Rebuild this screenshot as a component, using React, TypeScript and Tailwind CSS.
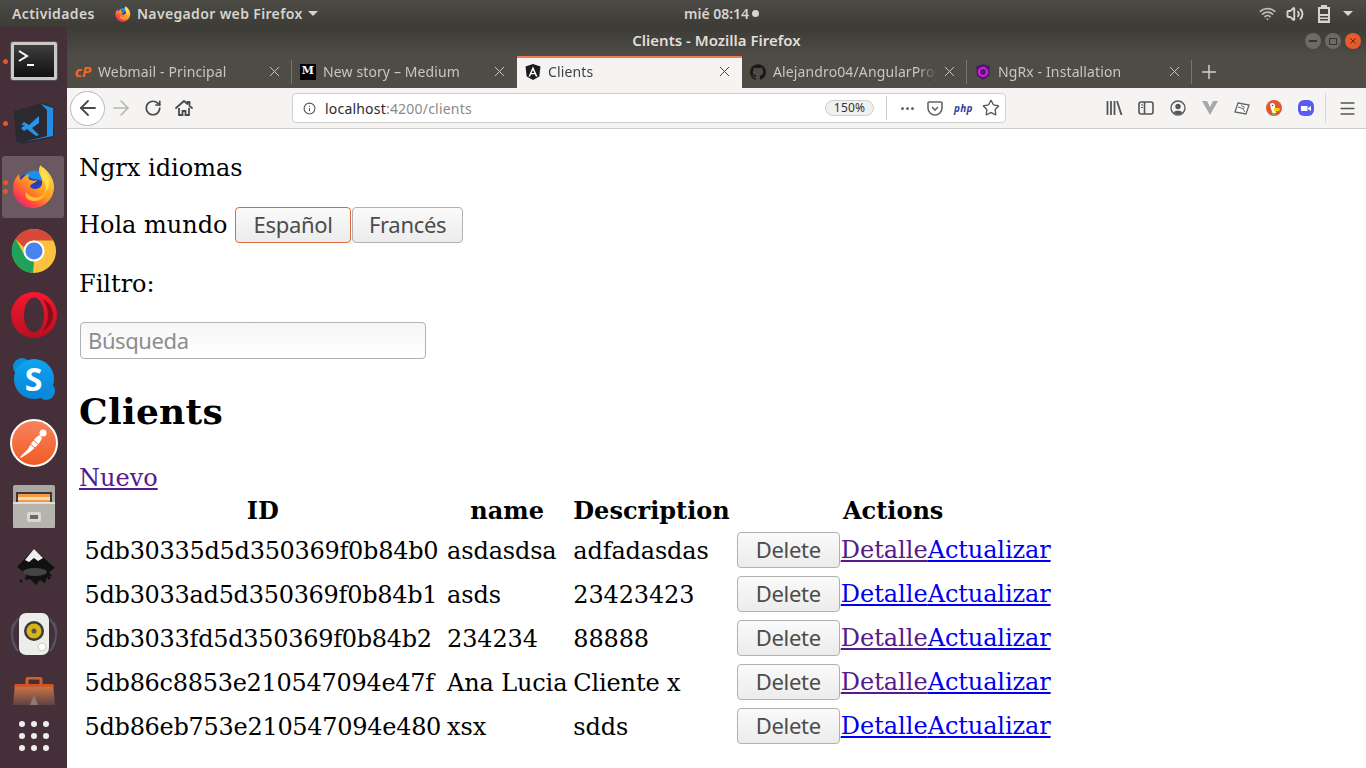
import { X, Plus, Info, ArrowLeft, ArrowRight, RotateCw, Star, Menu, Wifi, Volume2 } from "lucide-react";
import { SiGithub } from "react-icons/si";

const UI = "font-['Noto_Sans',sans-serif]";

const rows = [
  ["5db30335d5d350369f0b84b0", "asdasdsa", "adfadasdas", true],
  ["5db3033ad5d350369f0b84b1", "asds", "23423423", false],
  ["5db3033fd5d350369f0b84b2", "234234", "88888", true],
  ["5db86c8853e210547094e47f", "Ana Lucia", "Cliente x", true],
  ["5db86eb753e210547094e480", "xsx", "sdds", false],
] as const;

function FirefoxLogo({ size }: { size: number }) {
  return (
    <svg width={size} height={size} viewBox="0 0 44 44">
      <defs>
        <linearGradient id="ffa" x1="0.8" y1="0" x2="0.1" y2="0.9">
          <stop offset="0" stopColor="#ffe14d" />
          <stop offset="0.5" stopColor="#ff9a1f" />
          <stop offset="0.85" stopColor="#ff3b4a" />
          <stop offset="1" stopColor="#d92b8a" />
        </linearGradient>
      </defs>
      <circle cx="21" cy="24" r="17" fill="#2b3fb8" />
      <path d="M12 10c5-5 14-6 20-1 3 3 4 8 3 12-3-5-8-7-14-7z" fill="#1c8ef0" />
      <path d="M29 1c8 5 13 13 13 21 0 12-10 21-21 21C10 43 1 34 1 24c0-6 2-11 6-15 0 3 1 5 2 6 2-3 5-5 8-6-1 2-1 5 1 6 3 1 5 1 7 0-1 3-5 3-7 6 1 3 5 4 9 2 2-1 3-3 3-5 1-4-3-8-3-12 0-2 0-4 2-6z" fill="url(#ffa)" />
      <path d="M14 27c4 6 12 7 17 3 2-2 3-4 3-7 1 7-4 13-12 13-6 0-10-4-8-9z" fill="#ffbd2e" />
      <path d="M30 4c-2 4-1 8 1 11 3 4 4 8 2 12 4-3 6-10 3-15-1-3-3-6-6-8z" fill="#ffe14d" />
    </svg>
  );
}

function Terminal() {
  return (
    <div className="w-[46px] h-[38px] rounded-[2px] border-[3px] border-[#c9c9c5] bg-gradient-to-b from-[#3f3f3f] to-[#111] shadow-[0_0_0_1px_#555]">
      <svg width="40" height="32" viewBox="0 0 40 32">
        <path d="M5 6l8 5-8 5" fill="none" stroke="#fff" strokeWidth="2" />
        <path d="M13 20h7" stroke="#fff" strokeWidth="2" />
      </svg>
    </div>
  );
}

function VSCode() {
  return (
    <svg width="42" height="42" viewBox="0 0 42 42">
      <path d="M1 8L30 0l10 4 1 30-32 7-6-3z" fill="#2a2a30" />
      <path d="M28 1l12 4v28l-29 6 23-6V7z" fill="#1f8fe6" />
      <path d="M8 22l3-3 5 3 10-9v7l-7 5 7 7-3 1-9-7-3 2-3-3 4-3z" fill="#2796ea" />
    </svg>
  );
}

function Chrome() {
  return (
    <svg width="46" height="46" viewBox="0 0 46 46">
      <circle cx="23" cy="23" r="22" fill="#fbc23e" />
      <path d="M23 1a22 22 0 0 1 19.300 11.500H23a10.500 10.500 0 0 0-10 7L4.500 11A22 22 0 0 1 23 1z" fill="#d9493b" />
      <path d="M4.500 11l9.500 17a10.500 10.500 0 0 0 9 5.500L22 45A22 22 0 0 1 4.500 11z" fill="#1fa25a" />
      <circle cx="23" cy="23" r="10.500" fill="#fff" />
      <circle cx="23" cy="23" r="8.500" fill="#4a83ee" />
    </svg>
  );
}

function Opera() {
  return (
    <svg width="46" height="46" viewBox="0 0 46 46">
      <defs>
        <linearGradient id="op" x1="0" y1="0" x2="0" y2="1">
          <stop offset="0" stopColor="#f8182e" />
          <stop offset="1" stopColor="#b90f22" />
        </linearGradient>
      </defs>
      <circle cx="23" cy="23" r="23" fill="url(#op)" />
      <ellipse cx="23" cy="23" rx="10" ry="17.500" fill="#45303a" />
      <path d="M31 7c7 3 11 9 11 16s-4 13-11 16c4-4 6-10 6-16S35 11 31 7z" fill="#8e0b1c" />
    </svg>
  );
}

function Skype() {
  return (
    <div className="relative w-[42px] h-[42px]">
      <div className="absolute left-0 top-0 w-[18px] h-[18px] rounded-full bg-[#0a8ddb]" />
      <div className="absolute right-0 bottom-0 w-[18px] h-[18px] rounded-full bg-[#0a8ddb]" />
      <div className="absolute inset-[1px] rounded-full bg-gradient-to-b from-[#0fa4ee] to-[#0a84d6] flex items-center justify-center">
        <span className="font-['Noto_Sans',sans-serif] text-white font-bold text-[32px] leading-none">S</span>
      </div>
    </div>
  );
}

function Postman() {
  return (
    <div className="w-[48px] h-[48px] rounded-full border-2 border-white bg-gradient-to-b from-[#f9825a] to-[#f05a23] flex items-center justify-center">
      <svg width="40" height="40" viewBox="0 0 40 40">
        <circle cx="29" cy="10" r="3.500" fill="#fff" />
        <path d="M26 12c-4 1-9 8-12 14l-8 8 1 1 9-6c5-4 11-10 12-14z" fill="#fff" />
        <path d="M15 20l6 5M18 16l6 5" stroke="#f2693a" strokeWidth="1" />
      </svg>
    </div>
  );
}

function Files() {
  return (
    <svg width="42" height="44" viewBox="0 0 42 44">
      <rect x="0" y="0" width="42" height="42" rx="2" fill="#a9a8a3" />
      <rect x="3" y="7" width="36" height="12" fill="#3c3a38" />
      <rect x="5" y="9" width="32" height="8" fill="#f09a4a" />
      <rect x="5" y="12" width="32" height="3" fill="#f5d9a8" />
      <rect x="0" y="17" width="42" height="26" rx="1" fill="#b5b4af" />
      <rect x="0" y="17" width="42" height="2" fill="#dfdeda" />
      <rect x="14" y="27" width="14" height="10" rx="2" fill="#d8d7d3" />
      <rect x="17" y="30" width="8" height="4" fill="#6a6964" />
    </svg>
  );
}

function Inkscape() {
  return (
    <svg width="46" height="46" viewBox="0 0 46 46">
      <path d="M23 1L44 20l-6 4 3 4-5 1-2 6-5-3-4 5-6-6-5 1 1-6-9-7z" fill="#111" />
      <path d="M23 1l9 9-5 3-4-3-5 4-4-2z" fill="#eee" />
      <ellipse cx="24" cy="24" rx="12" ry="4" fill="#444" />
      <circle cx="38" cy="30" r="1.500" fill="#111" />
      <circle cx="10" cy="33" r="1.500" fill="#111" />
    </svg>
  );
}

function Speaker() {
  return (
    <svg width="48" height="44" viewBox="0 0 48 44">
      <path d="M8 6C0 15 0 29 8 38M4 10c-4 8-2 18 2 24M40 6c8 9 8 23 0 32M44 10c4 8 2 18-2 24" fill="none" stroke="#5d6a86" strokeWidth="2" opacity="0.6" />
      <rect x="9" y="0" width="30" height="42" rx="7" fill="#eceeea" />
      <circle cx="24" cy="18" r="10" fill="#3b3b3b" />
      <circle cx="24" cy="18" r="7.500" fill="#d8b31a" />
      <circle cx="24" cy="18" r="2.500" fill="#555" />
      <circle cx="32" cy="34" r="4" fill="#fff" stroke="#ccc" />
    </svg>
  );
}

function Bag() {
  return (
    <svg width="42" height="28" viewBox="0 0 42 28">
      <defs>
        <linearGradient id="bg" x1="0" y1="0" x2="0" y2="1">
          <stop offset="0" stopColor="#d97a45" />
          <stop offset="1" stopColor="#5f4345" />
        </linearGradient>
      </defs>
      <path d="M14 8V3a2 2 0 0 1 2-2h10a2 2 0 0 1 2 2v5" fill="none" stroke="#d2602c" strokeWidth="3" />
      <path d="M2 7h38l2 21H0z" fill="url(#bg)" />
      <path d="M2 7h38l1 3H1z" fill="#c9572a" />
      <path d="M21 18l-4 10h8z" fill="#8e7a78" />
    </svg>
  );
}

function Dock() {
  const items = [
    <Terminal key="t" />,
    <VSCode key="v" />,
    <FirefoxLogo key="f" size={44} />,
    <Chrome key="c" />,
    <Opera key="o" />,
    <Skype key="s" />,
    <Postman key="p" />,
    <Files key="fi" />,
    <Inkscape key="i" />,
    <Speaker key="sp" />,
  ];
  return (
    <aside className="relative w-[67px] shrink-0 bg-[#45303a] flex flex-col items-center pt-[2px] overflow-hidden">
      {items.map((item, i) => (
        <div key={i} className={`relative w-full shrink-0 flex items-center justify-center ${i === 1 ? "h-[62px]" : "h-[64px]"}`}>
          {i === 2 && <div className="absolute left-[2px] top-[1px] w-[62px] h-[62px] rounded-[3px] bg-white/20" />}
          <div className="relative">{item}</div>
          {i === 0 && <span className="absolute left-[3px] top-[30px] w-[5px] h-[5px] rounded-full bg-[#e95420]" />}
          {i === 1 && <span className="absolute left-[3px] top-[28px] w-[5px] h-[5px] rounded-full bg-[#e95420]" />}
          {i === 2 && <span className="absolute left-[3px] top-[25px] w-[5px] h-[5px] rounded-full bg-[#e95420]" />}
          {i === 2 && <span className="absolute left-[3px] top-[34px] w-[5px] h-[5px] rounded-full bg-[#e95420]" />}
        </div>
      ))}
      <div className="h-[46px] shrink-0 flex items-start pt-[10px]"><Bag /></div>
      <div className="grid grid-cols-3 gap-[6px] mt-[8px]">
        {Array.from({ length: 9 }).map((_, i) => (
          <span key={i} className="w-[6px] h-[6px] rounded-full bg-[#eeeeee]" />
        ))}
      </div>
    </aside>
  );
}

function TopBar() {
  return (
    <header className={`relative h-[27px] shrink-0 bg-gradient-to-b from-[#4e4c46] to-[#3c3b36] flex items-center text-[14px] font-semibold text-[#d6d4ce] ${UI}`}>
      <span className="ml-[12px] tracking-[0.4px]">Actividades</span>
      <span className="ml-[20px]"><FirefoxLogo size={16} /></span>
      <span className="ml-[6px] tracking-[0.35px]">Navegador web Firefox</span>
      <span className="ml-[5px] border-x-[5px] border-t-[5px] border-x-transparent border-t-[#d6d4ce]" />
      <span className="absolute left-[684px] flex items-center gap-[3px]">
        mié 08:14 <span className="w-[7px] h-[7px] rounded-full bg-[#d6d4ce]" />
      </span>
      <div className="ml-auto flex items-center pr-[13px]">
        <Wifi size={17} strokeWidth={2.5} className="text-[#bdbbb5]" />
        <Volume2 size={18} strokeWidth={2.5} className="ml-[10px] text-[#d6d4ce]" />
        <svg width="14" height="18" viewBox="0 0 14 18" className="ml-[13px]">
          <path d="M4 0h6v2h3v16H1V2h3z" fill="#d6d4ce" />
          <path d="M3 4h8v5H3z" fill="#45433e" />
          <path d="M3 11h8v1.500H3zM3 14h8v1.500H3z" fill="#45433e" />
        </svg>
        <span className="ml-[12px] border-x-[5px] border-t-[5px] border-x-transparent border-t-[#d6d4ce]" />
      </div>
    </header>
  );
}

function TitleBar() {
  return (
    <div className={`relative h-[29px] shrink-0 bg-gradient-to-b from-[#3c3b36] to-[#4f4c46] flex items-center justify-center pb-[2px] text-[15px] font-semibold text-[#e0ded8] ${UI}`}>
      <span>Clients - Mozilla Firefox</span>
      <div className="absolute right-[5px] top-[6px] flex gap-[4px]">
        <span className="w-[16px] h-[16px] rounded-full bg-[#6c6a64] flex items-center justify-center"><span className="w-[8px] h-[1.500px] bg-[#35342f]" /></span>
        <span className="w-[16px] h-[16px] rounded-full bg-[#6c6a64] flex items-center justify-center"><span className="w-[8px] h-[7px] border border-[#35342f]" /></span>
        <span className="w-[16px] h-[16px] rounded-full bg-[#e9592a] flex items-center justify-center"><X size={10} strokeWidth={2} className="text-[#3d2217]" /></span>
      </div>
    </div>
  );
}

const tabs = [
  { title: "Webmail - Principal", icon: <span className="text-[#f2691f] font-bold italic text-[15px] leading-none">cP</span> },
  { title: "New story – Medium", icon: <span className="w-[16px] h-[16px] bg-black text-white font-['DejaVu_Serif',serif] font-bold text-[11px] flex items-center justify-center">M</span> },
  {
    title: "Clients",
    active: true,
    icon: (
      <svg width="16" height="16" viewBox="0 0 16 16">
        <path d="M8 0l7.500 2.600-1.200 9.800L8 16l-6.300-3.600L.5 2.600z" fill="#1c1c20" />
        <path d="M8 2.500L3.500 12.500h1.700l.9-2.300h3.800l.9 2.300h1.700zM8 6l1.300 3H6.700z" fill="#fff" />
      </svg>
    ),
  },
  { title: "Alejandro04/AngularProject", icon: <SiGithub size={16} color="#1a1a1a" /> },
  {
    title: "NgRx - Installation",
    icon: (
      <svg width="16" height="16" viewBox="0 0 16 16">
        <path d="M8 0l7 2.500-1 9.500-6 4-6-4-1-9.500z" fill="#4b1a6b" />
        <circle cx="8" cy="8" r="4" fill="none" stroke="#e01bdc" strokeWidth="2.200" />
      </svg>
    ),
  },
];

function TabBar() {
  return (
    <div className={`h-[32px] shrink-0 bg-[#4f4c46] flex text-[14px] tracking-[0.12px] ${UI}`}>
      {tabs.map((t) => (
        <div key={t.title} className={`relative w-[225px] shrink-0 flex items-center pl-[8px] ${t.active ? "bg-[#f5f4f3] text-[#3f3f3f] border-t-2 border-[#ef7a53] pb-[3px]" : "text-[#c8c6bf] pb-[1px]"}`}>
          <span className="w-[16px] h-[16px] flex items-center justify-center shrink-0">{t.icon}</span>
          <span className="ml-[7px] w-[164px] overflow-hidden whitespace-nowrap [mask-image:linear-gradient(to_right,black_88%,transparent)]">{t.title}</span>
          <X size={17} strokeWidth={1.4} className={`absolute right-[9px] ${t.active ? "text-[#444]" : "text-[#c8c6bf]"}`} />
          {!t.active && t.title !== "New story – Medium" && <span className="absolute right-0 top-[4px] h-[24px] w-px bg-[#77756e]" />}
        </div>
      ))}
      <Plus size={22} strokeWidth={1.6} className="ml-[6px] self-center text-[#d4d2cc]" />
    </div>
  );
}

function NavBar() {
  return (
    <div className={`h-[41px] shrink-0 bg-[#f5f4f3] border-b border-[#cccccb] flex items-center ${UI}`}>
      <div className="ml-[3px] w-[35px] h-[35px] rounded-full bg-white border border-[#b8b8b8] flex items-center justify-center">
        <ArrowLeft size={24} strokeWidth={1.8} className="text-[#4a4a4a]" />
      </div>
      <ArrowRight size={24} strokeWidth={1.6} className="ml-[4px] text-[#b5b5b5]" />
      <RotateCw size={18} strokeWidth={2.3} className="ml-[11px] text-[#4a4a4a]" />
      <svg width="18" height="18" viewBox="0 0 18 18" className="ml-[13px]">
        <path d="M1 9l8-7 3.500 3V3h2v4l2.500 2" fill="none" stroke="#4a4a4a" strokeWidth="1.800" strokeLinejoin="round" strokeLinecap="round" />
        <path d="M4 9v7h3.500v-4h3v4H14V9" fill="none" stroke="#4a4a4a" strokeWidth="1.800" />
      </svg>
      <div className="ml-[99px] w-[714px] h-[30px] bg-white border border-[#cfcfce] rounded-[4px] flex items-center text-[14px] tracking-[0.2px]">
        <Info size={13} className="ml-[10px] text-[#555]" />
        <span className="ml-[9px] text-[#2b2b2b]">localhost</span>
        <span className="text-[#8a8a8a]">:4200/clients</span>
        <span className="ml-auto w-[49px] h-[16px] rounded-full bg-[#f0f0ef] border border-[#cfcfce] text-[12px] text-[#333] flex items-center justify-center">150%</span>
        <span className="ml-[12px] w-px h-[24px] bg-[#cfcfce]" />
        <span className="ml-[14px] flex gap-[2px]">
          <i className="w-[3px] h-[3px] rounded-full bg-[#666]" />
          <i className="w-[3px] h-[3px] rounded-full bg-[#666]" />
          <i className="w-[3px] h-[3px] rounded-full bg-[#666]" />
        </span>
        <svg width="16" height="15" viewBox="0 0 16 15" className="ml-[13px]">
          <path d="M2 1h12a1 1 0 0 1 1 1v5a7 7 0 0 1-14 0V2a1 1 0 0 1 1-1z" fill="none" stroke="#666" strokeWidth="1.600" />
          <path d="M5 6l3 3 3-3" fill="none" stroke="#666" strokeWidth="1.600" />
        </svg>
        <span className="ml-[11px] w-[18px] text-[10px] italic font-bold text-[#2f3f95]">php</span>
        <Star size={18} strokeWidth={1.8} className="ml-[10px] mr-[5px] text-[#555]" />
      </div>
      <svg width="17" height="14" viewBox="0 0 17 14" className="ml-[100px]">
        <path d="M1.500 0v14M5 0v14M8.500 0v14M11 0l4.500 14" stroke="#555" strokeWidth="1.800" fill="none" />
      </svg>
      <svg width="16" height="14" viewBox="0 0 16 14" className="ml-[15px]">
        <rect x="1" y="1" width="14" height="12" rx="2" fill="none" stroke="#555" strokeWidth="1.600" />
        <path d="M6.500 1v12" stroke="#555" strokeWidth="1.600" />
        <path d="M3 4h2M3 6.500h2" stroke="#555" />
      </svg>
      <svg width="16" height="16" viewBox="0 0 16 16" className="ml-[16px]">
        <circle cx="8" cy="8" r="7" fill="none" stroke="#555" strokeWidth="1.300" />
        <circle cx="8" cy="6.500" r="2.700" fill="#555" />
        <path d="M3.500 12.500c1-2.500 8-2.500 9 0-2 2-7 2-9 0z" fill="#555" />
      </svg>
      <svg width="16" height="14" viewBox="0 0 16 14" className="ml-[16px]">
        <path d="M0 0h5l3 6 3-6h5L8 14z" fill="#a8a8a8" />
      </svg>
      <svg width="16" height="13" viewBox="0 0 16 13" className="ml-[16px]">
        <path d="M4 1l11 2-3 9-11-2z" fill="#fff" stroke="#666" strokeWidth="1.300" />
        <path d="M4 5l6 2M7 3.500l4 2M9 7l2 3" stroke="#666" />
      </svg>
      <svg width="16" height="16" viewBox="0 0 16 16" className="ml-[16px]">
        <circle cx="8" cy="8" r="8" fill="#de5833" />
        <path d="M4 4c2-2 5-1 5 2l1 8H7L5 9z" fill="#fff" />
        <path d="M8 8h6l-1 1.500h1l-1 1.500H8z" fill="#fdd20a" />
        <path d="M6 13h4v3H6z" fill="#65bc46" />
        <circle cx="6.500" cy="5.500" r="0.800" fill="#2d4f8e" />
      </svg>
      <span className="ml-[16px] w-[16px] h-[16px] rounded-[6px] bg-[#5a5cf0] flex items-center justify-center">
        <svg width="10" height="7" viewBox="0 0 10 7"><path d="M0 1h6.500v5H0zM7 3l3-2v5L7 4z" fill="#fff" /></svg>
      </span>
      <span className="ml-[11px] w-px h-[30px] bg-[#d6d6d5]" />
      <Menu size={19} strokeWidth={2} className="ml-[12px] text-[#555]" />
    </div>
  );
}

function NativeButton({ label, focused, width }: { label: string; focused?: boolean; width: string }) {
  return (
    <button className={`${width} h-[36px] pb-[2px] rounded-[4px] border bg-gradient-to-b from-[#fafafa] to-[#ececec] text-[#4c4c4c] text-[22px] leading-none tracking-[-0.3px] align-baseline ${UI} ${focused ? "border-[#dd6a40]" : "border-[#b1b1b1]"}`}>
      {label}
    </button>
  );
}

function Page() {
  return (
    <main className="flex-1 overflow-hidden bg-white px-[12px] text-[24px] leading-[28px] text-black font-['DejaVu_Serif',serif]">
      <p className="mt-[25px]">Ngrx idiomas</p>
      <p className="mt-[25px]">
        Hola mundo <NativeButton label="Español" focused width="w-[116px]" />
        <span className="ml-[1px]"><NativeButton label="Francés" width="w-[111px]" /></span>
      </p>
      <p className="mt-[27px]">Filtro:</p>
      <input
        placeholder="Búsqueda"
        className={`mt-[24px] ml-[1px] block w-[346px] h-[37px] pl-[7px] pb-[2px] rounded-[4px] border border-[#b1b1b1] bg-gradient-to-b from-[#f6f6f6] to-white text-[22px] tracking-[-0.4px] placeholder:text-[#8d8d8d] ${UI}`}
      />
      <h1 className="mt-[31px] text-[36px] leading-[42px] font-bold tracking-[0.3px]">Clients</h1>
      <a href="#" className="block mt-[32px] underline text-[#551a8b] w-fit">Nuevo</a>
      <table className="ml-[1px] border-separate border-spacing-[3px]">
        <thead>
          <tr className="font-bold">
            <th className="px-[1.500px] pt-[1.500px] pb-[2.500px]">ID</th>
            <th className="px-[1.500px] pt-[1.500px] pb-[2.500px]">name</th>
            <th className="px-[1.500px] pt-[1.500px] pb-[2.500px]">Description</th>
            <th className="px-[1.500px] pt-[1.500px] pb-[2.500px]">Actions</th>
          </tr>
        </thead>
        <tbody>
          {rows.map(([id, name, desc, visited]) => (
            <tr key={id}>
              <td className="px-[1.500px] py-[2.500px] tracking-[-0.29px]">{id}</td>
              <td className="px-[1.500px] py-[2.500px] tracking-[-0.15px]">{name}</td>
              <td className="px-[1.500px] py-[2.500px] tracking-[-0.15px]">{desc}</td>
              <td className="px-[1.500px] pt-[1.500px] pb-[3.500px] whitespace-nowrap">
                <span className="ml-[1px]"><NativeButton label="Delete" width="w-[103px]" /></span>
                <a href="#" className={`ml-[1px] underline ${visited ? "text-[#551a8b]" : "text-[#0000ee]"}`}>Detalle</a>
                <a href="#" className="underline tracking-[-0.1px] text-[#0000ee]">Actualizar</a>
              </td>
            </tr>
          ))}
        </tbody>
      </table>
    </main>
  );
}

export default function App() {
  return (
    <div className="h-screen w-screen overflow-hidden flex flex-col">
      <TopBar />
      <div className="flex-1 min-h-0 flex">
        <Dock />
        <div className="flex-1 min-w-0 flex flex-col">
          <TitleBar />
          <TabBar />
          <NavBar />
          <Page />
        </div>
      </div>
    </div>
  );
}
